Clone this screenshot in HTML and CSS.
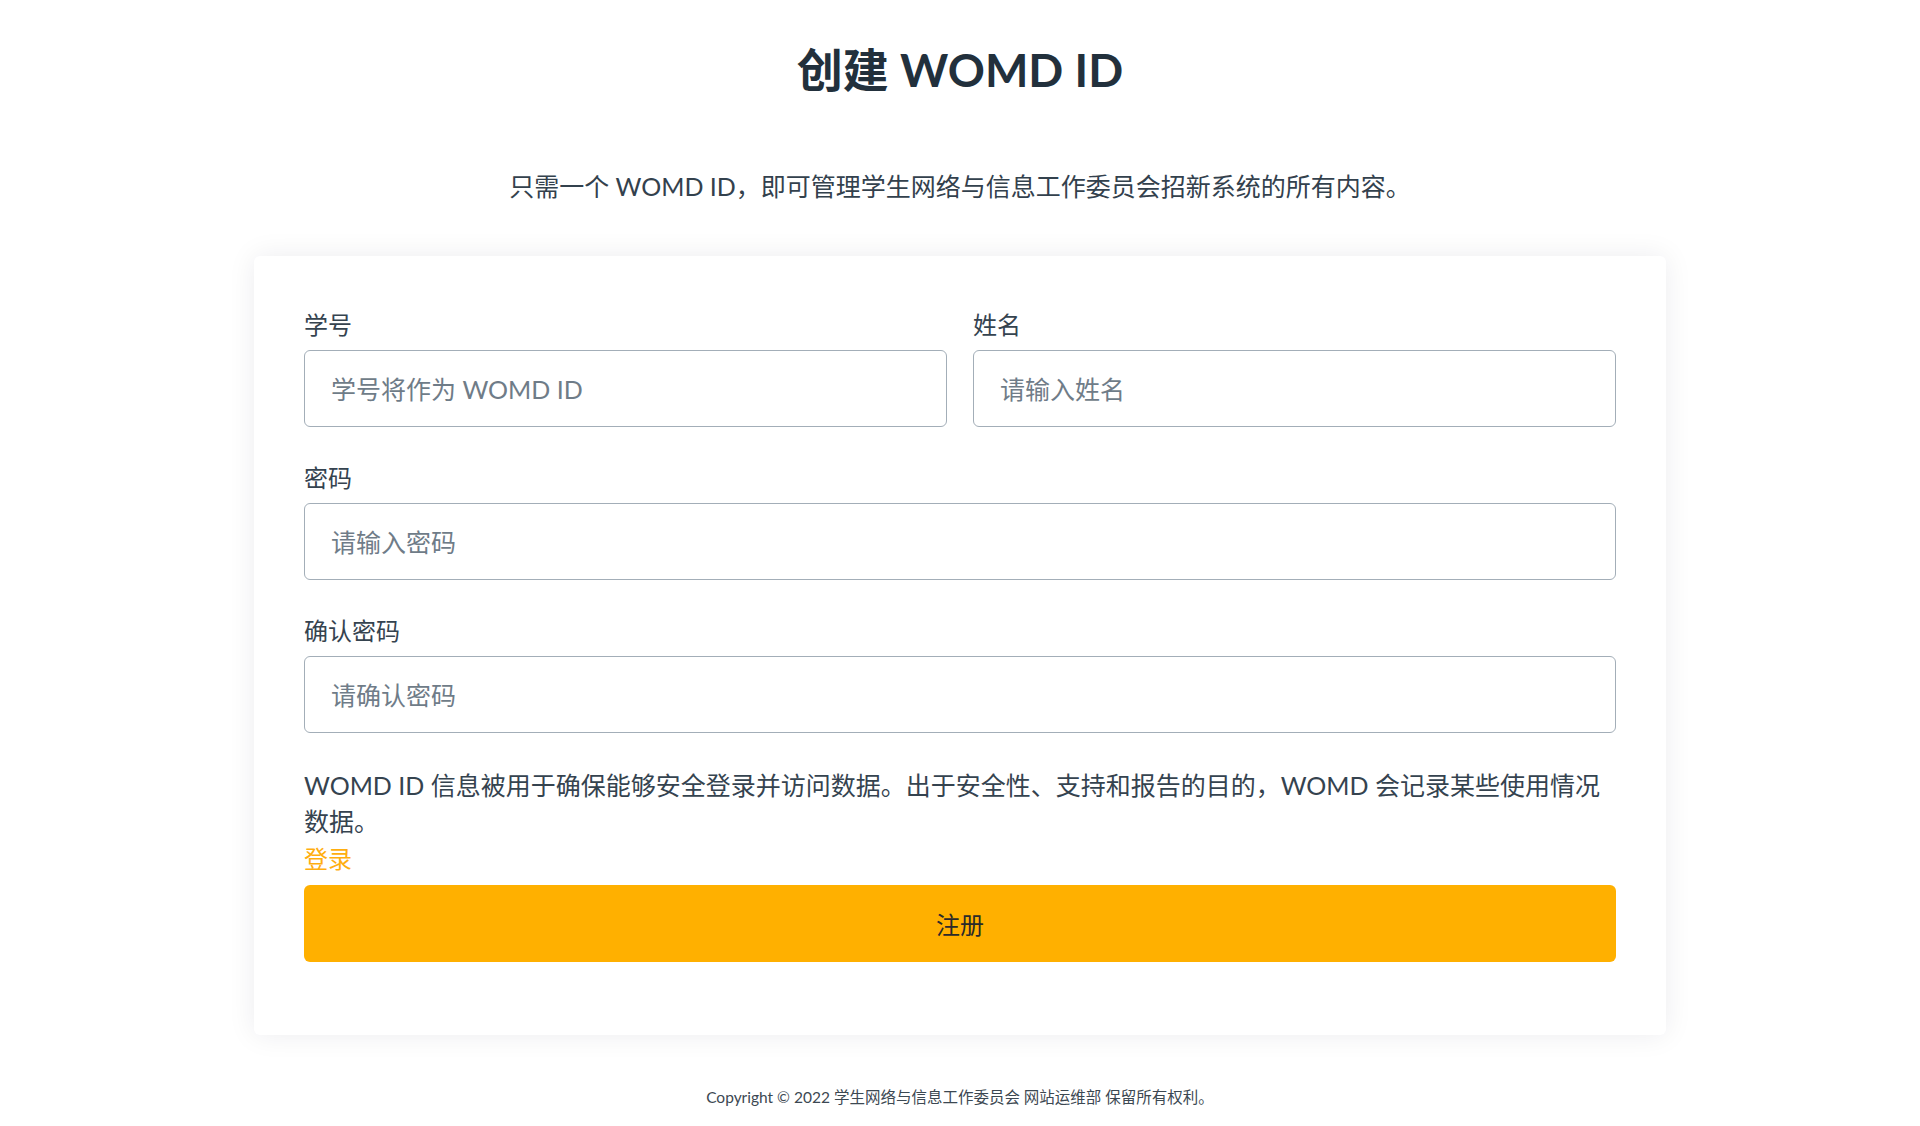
FILE: index.html
```html
<!DOCTYPE html>
<html lang="zh-CN">
<head>
<meta charset="utf-8">
<title>创建 WOMD ID</title>
<link rel="stylesheet" href="styles.css">
</head>
<body>
<main class="page">
  <h1 class="title">创建 WOMD ID</h1>
  <p class="subtitle">只需一个 WOMD ID，即可管理学生网络与信息工作委员会招新系统的所有内容。</p>
  <form class="card">
    <div class="row">
      <div class="field">
        <label class="label">学号</label>
        <input class="input" type="text" placeholder="学号将作为 WOMD ID">
      </div>
      <div class="field">
        <label class="label">姓名</label>
        <input class="input" type="text" placeholder="请输入姓名">
      </div>
    </div>
    <div class="field">
      <label class="label">密码</label>
      <input class="input" type="password" placeholder="请输入密码">
    </div>
    <div class="field">
      <label class="label">确认密码</label>
      <input class="input" type="password" placeholder="请确认密码">
    </div>
    <p class="notice">WOMD ID 信息被用于确保能够安全登录并访问数据。出于安全性、支持和报告的目的，WOMD 会记录某些使用情况数据。</p>
    <a class="login" href="#">登录</a>
    <button class="submit" type="button">注册</button>
  </form>
  <footer class="footer">Copyright © 2022 学生网络与信息工作委员会 网站运维部 保留所有权利。</footer>
</main>
</body>
</html>
```
FILE: styles.css
```css
* { box-sizing: border-box; }
html, body { margin: 0; padding: 0; background: #fff; }
body {
  font-family: Lato, "Noto Sans CJK SC", "Noto Sans", sans-serif;
  color: #2f3d4a;
}
.page {
  display: flex;
  flex-direction: column;
  align-items: center;
}
.title {
  margin: 43px 0 0;
  font-size: 46px;
  line-height: 54px;
  font-weight: 700;
  color: #22303c;
}
.subtitle {
  margin: 71px 0 0;
  font-size: 25px;
  line-height: 37px;
  color: #33414d;
}
.card {
  margin-top: 51px;
  width: 1412px;
  background: #fff;
  border-radius: 6px;
  box-shadow: 0 0 28px rgba(20, 30, 50, 0.08);
  padding: 51px 50px 73px;
  display: flex;
  flex-direction: column;
}
.row {
  display: grid;
  grid-template-columns: 1fr 1fr;
  column-gap: 26px;
}
.field {
  display: flex;
  flex-direction: column;
  margin-bottom: 33px;
}
.label {
  font-size: 24px;
  line-height: 36px;
  color: #35434f;
  margin-bottom: 7px;
}
.input {
  height: 77px;
  border: 1px solid #a3aeb8;
  border-radius: 6px;
  padding: 0 26px;
  font-family: inherit;
  font-size: 25px;
  color: #2f3d4a;
  background: #fff;
  outline: none;
}
.input::placeholder { color: #6f7c88; }
.notice {
  margin: 1px 0 0;
  font-size: 25px;
  line-height: 36px;
  color: #35434f;
}
.login {
  margin-top: 2px;
  font-size: 24px;
  line-height: 36px;
  color: #ffae0f;
  text-decoration: none;
  align-self: flex-start;
}
.submit {
  margin-top: 8px;
  height: 77px;
  border: none;
  border-radius: 6px;
  background: #ffb000;
  font-family: inherit;
  font-size: 24px;
  color: #2a2a2a;
  cursor: pointer;
}
.footer {
  margin-top: 50px;
  font-size: 15.5px;
  line-height: 24px;
  color: #3c4852;
}
```
